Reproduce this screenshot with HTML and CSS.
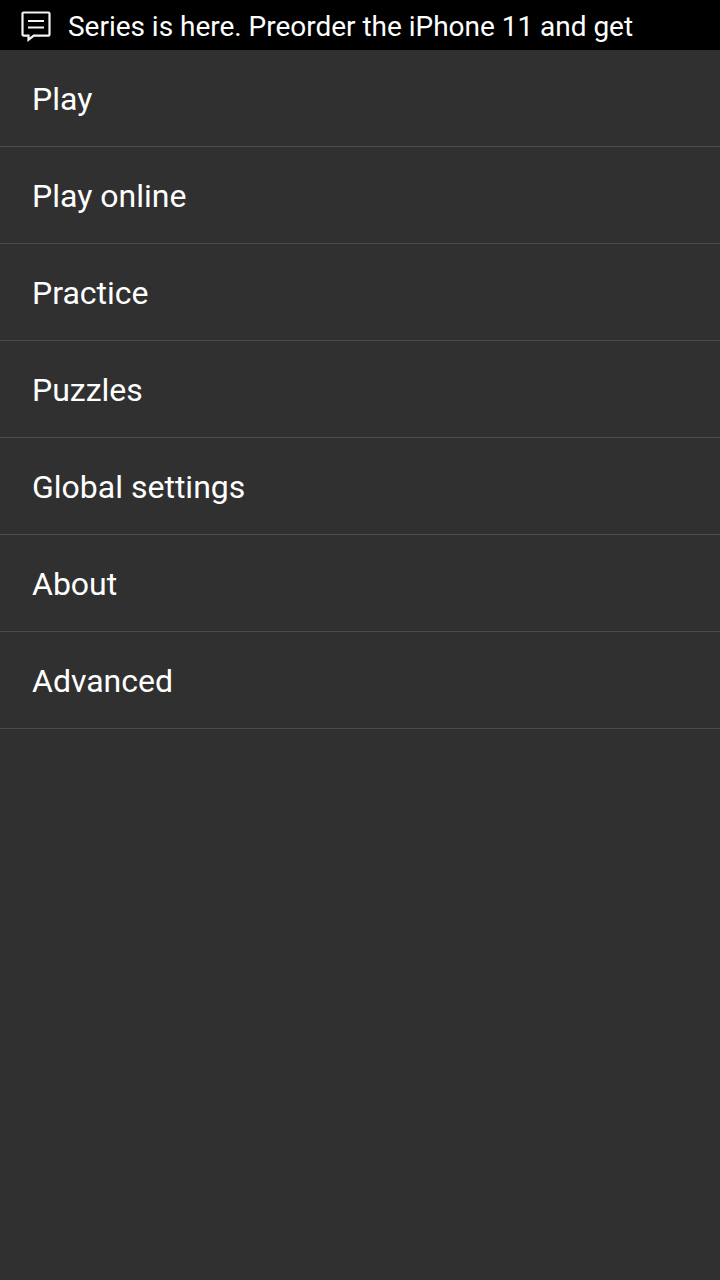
FILE: index.html
```html
<!DOCTYPE html>
<html lang="en">
<head>
<meta charset="utf-8">
<title>Main menu</title>
<link rel="stylesheet" href="styles.css">
</head>
<body>
<header class="status-bar">
  <svg class="message-icon" viewBox="0 0 32 32" fill="none" stroke="#f4f4f4" stroke-width="2.2" aria-hidden="true">
    <path d="M3.7 2.5H28.3Q29.5 2.5 29.5 3.7V24.4Q29.5 25.6 28.3 25.6H13.8L8.5 29.7V25.6H3.7Q2.5 25.6 2.5 24.4V3.7Q2.5 2.5 3.7 2.5Z"/>
    <path d="M8 11H24M8 17.4H24" stroke-width="2"/>
  </svg>
  <span class="ticker">Series is here. Preorder the iPhone 11 and get</span>
</header>
<ul class="menu">
  <li class="menu-item">Play</li>
  <li class="menu-item">Play online</li>
  <li class="menu-item">Practice</li>
  <li class="menu-item">Puzzles</li>
  <li class="menu-item">Global settings</li>
  <li class="menu-item">About</li>
  <li class="menu-item">Advanced</li>
</ul>
</body>
</html>
```
FILE: styles.css
```css
body {
  margin: 0;
  min-height: 1280px;
  background: #303030;
  color: #fff;
  font-family: Roboto, sans-serif;
}

.status-bar {
  display: flex;
  align-items: center;
  gap: 16px;
  box-sizing: border-box;
  height: 50px;
  padding: 2px 20px 0;
  background: #000;
}

.message-icon {
  width: 32px;
  height: 32px;
}

.ticker {
  padding-top: 2px;
  font-size: 28px;
  line-height: 32px;
  letter-spacing: -0.02px;
  white-space: nowrap;
}

.menu {
  margin: 0;
  padding: 0;
  list-style: none;
}

.menu-item {
  height: 96px;
  padding-left: 32px;
  border-bottom: 1px solid #4b4b4b;
  font-size: 32px;
  line-height: 98px;
}
```
